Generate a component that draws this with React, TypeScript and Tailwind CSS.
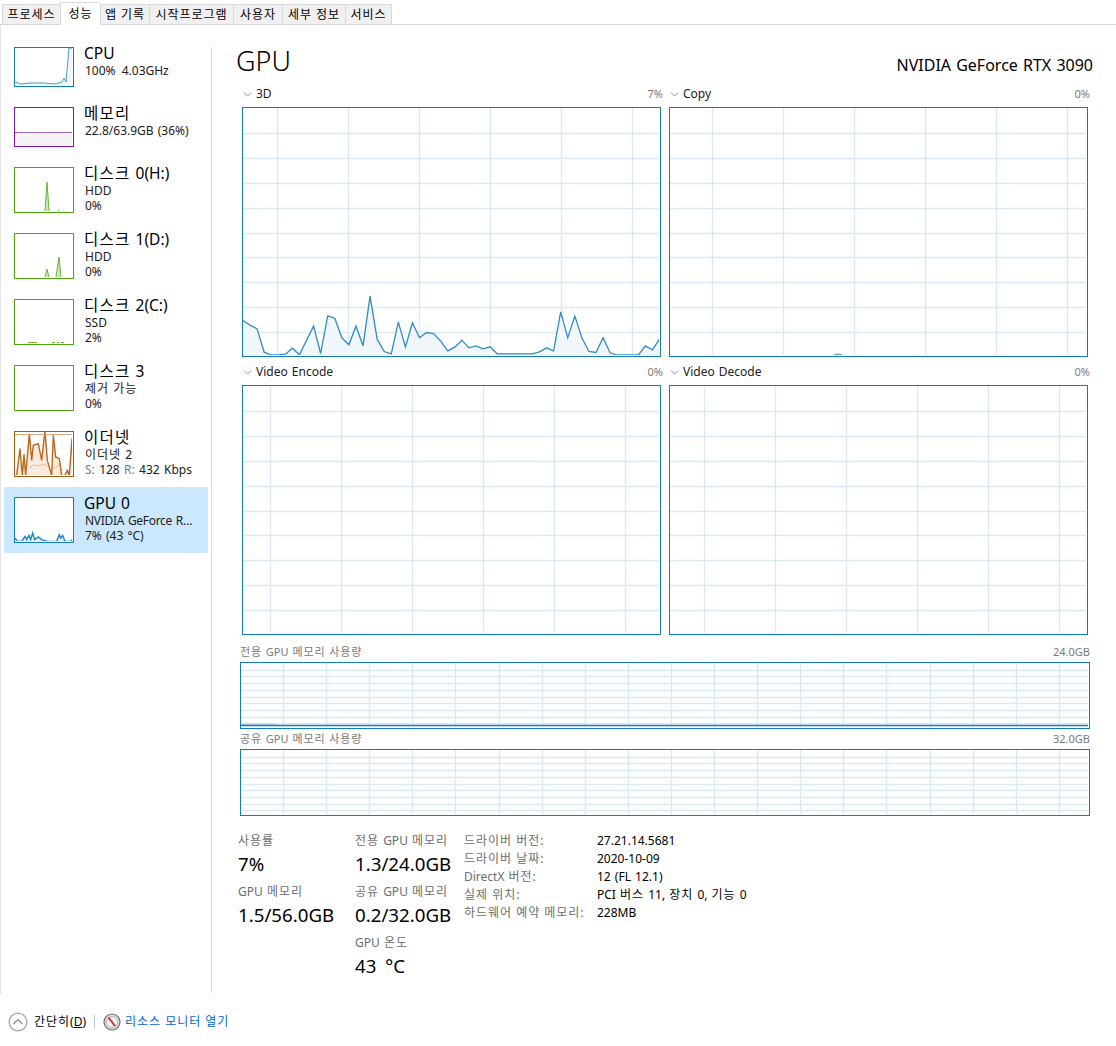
import React from 'react';
import { ChevronDown } from 'lucide-react';

const TABS = ['프로세스', '성능', '앱 기록', '시작프로그램', '사용자', '세부 정보', '서비스'];
const TAB_WIDTHS = ['w-[58px]', 'w-[40px]', 'w-[49px]', 'w-[84px]', 'w-[49px]', 'w-[63px]', 'w-[47px]'];

const BLUE = '#117dbb';
const GRID = '#d9eaf4';

// y values read off the 3D graph, one sample every 7px, measured down from y=270 (x3)
const GPU_3D = [
  153, 167, 178, 248, 258, 259, 254, 236, 256, 212, 170, 252, 139, 146, 205, 226, 170, 229, 80, 209,
  246, 253, 158, 232, 160, 205, 189, 192, 215, 244, 233, 212, 235, 229, 238, 232, 253, 253, 253, 253,
  253, 253, 247, 235, 244, 127, 205, 140, 205, 246, 249, 205, 250, 257, 257, 257, 258, 229, 241, 208,
];

// Hangul runs wider in the original font, so they get a little tracking
const Ko = ({ children }: { children: string }) => (
  <span>
    {children.split(/([가-힣]+)/).map((part, i) =>
      i % 2 === 1 ? <span key={i} className="tracking-[0.08em]">{part}</span> : part
    )}
  </span>
);

type GraphProps = {
  w: number;
  h: number;
  stepX: number;
  stepY: number;
  offsetX: number;
  children?: React.ReactNode;
};

const Graph = ({ w, h, stepX, stepY, offsetX, children }: GraphProps) => {
  const vs: number[] = [];
  for (let x = offsetX; x < w; x += stepX) vs.push(Math.round(x));
  const hs: number[] = [];
  for (let y = stepY; y < h - 1; y += stepY) hs.push(Math.round(y));
  return (
    <div className="border-[1.5px] border-[#117dbb] box-border" style={{ width: w + 3, height: h + 3 }}>
      <svg width={w} height={h} className="block">
        {vs.map(x => <line key={x} x1={x + 0.5} x2={x + 0.5} y1={0} y2={h} stroke={GRID} strokeWidth={1.4} />)}
        {hs.map(y => <line key={y} x1={0} x2={w} y1={y + 0.5} y2={y + 0.5} stroke={GRID} strokeWidth={1.4} />)}
        {children}
      </svg>
    </div>
  );
};

const Thumb = ({ color, h, children }: { color: string; h: number; children?: React.ReactNode }) => (
  <div className="w-[60px] shrink-0 border-[1.5px] bg-white box-border" style={{ height: h, borderColor: color }}>
    <svg width={57} height={h - 3} className="block">{children}</svg>
  </div>
);

const NavItem = ({ title, lines, thumb, selected, h }: { title: string; lines: React.ReactNode[]; thumb: React.ReactNode; selected?: boolean; h: string }) => (
  <div className={`flex gap-[10px] pl-[10px] pt-[10px] ${h} ${selected ? 'bg-[#cce8ff]' : ''}`}>
    {thumb}
    <div className="min-w-0 -mt-[4px]">
      <div className="text-[15.5px] leading-[20px] text-black whitespace-nowrap"><Ko>{title}</Ko></div>
      {lines.map((l, i) => (
        <div key={i} className="text-[12px] leading-[15px] pl-px text-[#202020] whitespace-nowrap">{l}</div>
      ))}
    </div>
  </div>
);

const poly = (pts: [number, number][], color: string, fill: string, base: number, width = 1) => (
  <>
    <polygon points={`${pts[0][0]},${base} ${pts.map(p => p.join(',')).join(' ')} ${pts[pts.length - 1][0]},${base}`} fill={fill} />
    <polyline points={pts.map(p => p.join(',')).join(' ')} fill="none" stroke={color} strokeWidth={width} />
  </>
);

const fromZoom = (pts: [number, number][], x0: number, y0: number): [number, number][] =>
  pts.map(([x, y]) => [(x - x0) / 3, (y - y0) / 3]);

const ETH = fromZoom(
  [[15, 145], [20, 145], [30, 65], [37, 145], [42, 82], [47, 145], [58, 20], [65, 100], [70, 55], [85, 50], [95, 100], [105, 12], [112, 100], [125, 145], [130, 25], [137, 90], [148, 95], [155, 145], [165, 145], [172, 130], [178, 145], [186, 35], [190, 145]],
  15, 15,
);

const GPU_THUMB = fromZoom(
  [[15, 330], [22, 340], [35, 340], [45, 325], [50, 335], [57, 322], [62, 335], [68, 315], [74, 335], [85, 327], [95, 335], [105, 338], [115, 340], [140, 340], [148, 320], [152, 330], [158, 322], [165, 340], [180, 340], [188, 335]],
  15, 210,
);

const GraphHeader = ({ label, value }: { label: string; value: string }) => (
  <div className="flex items-center h-[28px] w-[421px] pt-[2px] text-[12px]">
    <ChevronDown size={13} strokeWidth={1.5} className="text-[#777] -ml-[1px]" />
    <span className="text-[#202020] ml-[2px]">{label}</span>
    <span className="ml-auto text-[11px] text-[#7a7a7a]">{value}</span>
  </div>
);

const Stat = ({ label, value }: { label: string; value: string }) => (
  <div className="h-[51px]">
    <div className="text-[12px] leading-[16px] text-[#6d6d6d] whitespace-nowrap"><Ko>{label}</Ko></div>
    <div className="text-[18.7px] leading-[25px] mt-[2px] text-black whitespace-nowrap [word-spacing:4px]">{value}</div>
  </div>
);

const DRIVER = [
  ['드라이버 버전:', '27.21.14.5681'],
  ['드라이버 날짜:', '2020-10-09'],
  ['DirectX 버전:', '12 (FL 12.1)'],
  ['실제 위치:', 'PCI 버스 11, 장치 0, 기능 0'],
  ['하드웨어 예약 메모리:', '228MB'],
];

export default function App() {
  const pts3d: [number, number][] = GPU_3D.map((y, i) => [i * 7.06, Math.min(161.5 + y / 3, 247)]);

  return (
    <div className="w-[1116px] h-[1046px] bg-white overflow-hidden font-['Noto_Sans','Noto_Sans_CJK_KR',sans-serif] [word-spacing:1px] text-black">

      {/* Tab strip */}
      <div className="flex items-end h-[25px] pl-[2px] border-b border-[#d9d9d9]">
        {TABS.map((t, i) => (
          <div
            key={t}
            className={`${TAB_WIDTHS[i]} flex items-center justify-center text-[12px] border border-[#d9d9d9] border-r-0 last:border-r ${
              i === 1 ? 'h-[23px] bg-white border-b-0 -mb-px' : 'h-[20px] bg-[#f0f0f0] border-b-0'
            }`}
          >
            <Ko>{t}</Ko>
          </div>
        ))}
      </div>

      <div className="flex h-[969px] pt-[22px] border-l border-[#e5e5e5]">

        {/* Sidebar */}
        <div className="w-[204px] h-[946px] px-[3px] border-r border-[#d9d9d9] shrink-0 box-content">
          <div className="-mt-[10px]">
            <NavItem
              h="h-[60px]"
              title="CPU"
              lines={[<span className="[word-spacing:3px]">100% 4.03GHz</span>]}
              thumb={
                <Thumb color={BLUE} h={40}>
                  {poly([[0, 34], [6, 36], [14, 35], [22, 35], [30, 35], [40, 36], [47, 34], [49, 30], [51, 34], [54, 0], [57, 0]], '#4a9fd0', '#f1f6fa', 37)}
                </Thumb>
              }
            />
            <NavItem
              h="h-[60px]"
              title="메모리"
              lines={['22.8/63.9GB (36%)']}
              thumb={
                <Thumb color="#8b12ae" h={40}>
                  <rect x={0} y={24} width={57} height={13} fill="#f4f2f4" />
                  <line x1={0} x2={57} y1={24.5} y2={24.5} stroke="#a66bbd" />
                </Thumb>
              }
            />
            <NavItem
              h="h-[66px]"
              title="디스크 0(H:)"
              lines={['HDD', '0%']}
              thumb={
                <Thumb color="#4da60c" h={46}>
                  {poly([[30, 43], [32, 14], [34, 43]], '#6cb33a', '#cfe5bf', 43)}
                  <line x1={43} x2={44} y1={42.5} y2={42.5} stroke="#6cb33a" />
                </Thumb>
              }
            />
            <NavItem
              h="h-[66px]"
              title="디스크 1(D:)"
              lines={['HDD', '0%']}
              thumb={
                <Thumb color="#4da60c" h={46}>
                  {poly([[30, 43], [32, 35], [34, 43]], '#6cb33a', '#cfe5bf', 43)}
                  {poly([[41, 43], [44, 23], [46, 43]], '#6cb33a', '#cfe5bf', 43)}
                </Thumb>
              }
            />
            <NavItem
              h="h-[66px]"
              title="디스크 2(C:)"
              lines={['SSD', '2%']}
              thumb={
                <Thumb color="#4da60c" h={46}>
                  <line x1={13} x2={22} y1={42.5} y2={42.5} stroke="#6cb33a" />
                  <line x1={37} x2={40} y1={42.5} y2={42.5} stroke="#6cb33a" />
                  <line x1={42} x2={44} y1={42.5} y2={42.5} stroke="#6cb33a" />
                  <line x1={46} x2={49} y1={42.5} y2={42.5} stroke="#6cb33a" />
                </Thumb>
              }
            />
            <NavItem
              h="h-[66px]"
              title="디스크 3"
              lines={[<Ko>제거 가능</Ko>, '0%']}
              thumb={<Thumb color="#4da60c" h={46} />}
            />
            <NavItem
              h="h-[66px]"
              title="이더넷"
              lines={[<Ko>이더넷 2</Ko>, <span className="[word-spacing:1.2px]"><span className="text-[#7a7a7a]">S:</span> 128 <span className="text-[#7a7a7a]">R:</span> 432 Kbps</span>]}
              thumb={
                <Thumb color="#a75b12" h={46}>
                  {poly(ETH, '#b9681f', '#fcebdd', 43, 1.4)}
                  <line x1={0} x2={57} y1={2.5} y2={2.5} stroke="#d8ab85" />
                  <polyline points="15,36 18,33 24,34 28,32 34,35 38,37 44,33 48,38" fill="none" stroke="#d98a4a" strokeDasharray="1 1" />
                </Thumb>
              }
            />
            <NavItem
              selected
              h="h-[66px]"
              title="GPU 0"
              lines={[<span className="tracking-[-0.3px]">NVIDIA GeForce R…</span>, '7% (43 °C)']}
              thumb={
                <Thumb color={BLUE} h={46}>
                  {poly(GPU_THUMB, '#1b87c6', '#e6f0f7', 43, 1.4)}
                </Thumb>
              }
            />
          </div>
        </div>

        {/* Main panel */}
        <div className="pl-[30px] w-[880px]">
          <div className="flex justify-between items-center h-[28px] w-[858px] -ml-[6px] pr-[1px]">
            <div className="text-[27px] leading-[28px] font-light">GPU</div>
            <div className="text-[16px] leading-[28px] mt-[8px]">NVIDIA GeForce RTX 3090</div>
          </div>

          <div className="grid grid-cols-[427px_421px] mt-[4px]">
            <div>
              <GraphHeader label="3D" value="7%" />
              <Graph w={416} h={247} stepX={71} stepY={24.9} offsetX={34}>
                {poly(pts3d, '#2f8bc4', '#f1f6fa', 247, 1.3)}
              </Graph>
            </div>
            <div>
              <GraphHeader label="Copy" value="0%" />
              <Graph w={416} h={247} stepX={71} stepY={24.9} offsetX={42}>
                <polyline points="164,247 168,246 172,247" fill="none" stroke="#2f8bc4" />
              </Graph>
            </div>
            <div>
              <GraphHeader label="Video Encode" value="0%" />
              <Graph w={416} h={247} stepX={71} stepY={24.9} offsetX={27} />
            </div>
            <div>
              <GraphHeader label="Video Decode" value="0%" />
              <Graph w={416} h={247} stepX={71} stepY={24.9} offsetX={34} />
            </div>
          </div>

          <div className="-ml-[2px] w-[850px] mt-[7px]">
            <div className="flex justify-between h-[20px] items-center text-[11px] text-[#7a7a7a]">
              <Ko>전용 GPU 메모리 사용량</Ko><span>24.0GB</span>
            </div>
            <Graph w={847} h={64} stepX={43.1} stepY={6.7} offsetX={42}>
              <polygon points="0,60.5 28,60.5 40,62 0,62" fill="#bcd9ea" />
              <line x1={0} x2={847} y1={62.5} y2={62.5} stroke={BLUE} strokeWidth={1.5} />
            </Graph>
            <div className="flex justify-between h-[20px] items-center text-[11px] text-[#7a7a7a]">
              <Ko>공유 GPU 메모리 사용량</Ko><span>32.0GB</span>
            </div>
            <Graph w={847} h={64} stepX={43.1} stepY={6.7} offsetX={42} />
          </div>

          {/* Stats */}
          <div className="flex mt-[17px] -ml-[4px]">
            <div className="w-[116px]">
              <Stat label="사용률" value="7%" />
              <Stat label="GPU 메모리" value="1.5/56.0GB" />
            </div>
            <div className="w-[110px] pl-px">
              <Stat label="전용 GPU 메모리" value="1.3/24.0GB" />
              <Stat label="공유 GPU 메모리" value="0.2/32.0GB" />
              <Stat label="GPU 온도" value="43 °C" />
            </div>
            <div className="text-[12px] leading-[18px] -mt-[1px]">
              {DRIVER.map(([k, v]) => (
                <div key={k} className="flex">
                  <span className="w-[133px] text-[#6d6d6d] whitespace-nowrap"><Ko>{k}</Ko></span>
                  <span className="text-black whitespace-nowrap"><Ko>{v}</Ko></span>
                </div>
              ))}
            </div>
          </div>
        </div>
      </div>

      {/* Footer */}
      <div className="flex items-center h-[26px] mt-[15px] pl-[8px] text-[12px]">
        <svg width={20} height={20} viewBox="0 0 20 20">
          <circle cx={10} cy={10} r={8.8} fill="none" stroke="#a8a8a8" strokeWidth={1.3} />
          <path d="M5.5 12 L10 7.5 L14.5 12" fill="none" stroke="#8a8a8a" strokeWidth={1.2} />
        </svg>
        <span className="ml-[6px] text-black"><Ko>간단히</Ko>(<span className="underline">D</span>)</span>
        <div className="w-px h-[14px] bg-[#c8c8c8] mx-[8px]" />
        <svg width={18} height={18} viewBox="0 0 18 18">
          <circle cx={9} cy={9} r={8} fill="#dcdcdc" stroke="#6f6f6f" strokeWidth={1.2} />
          <circle cx={9} cy={9} r={5.6} fill="#f8f4ee" stroke="#9a9a9a" strokeWidth={0.6} />
          <path d="M5.5 4.5 L12 13" stroke="#c9302c" strokeWidth={2} />
        </svg>
        <span className="ml-[4px] text-[#0066cc]"><Ko>리소스 모니터 열기</Ko></span>
      </div>
    </div>
  );
}
